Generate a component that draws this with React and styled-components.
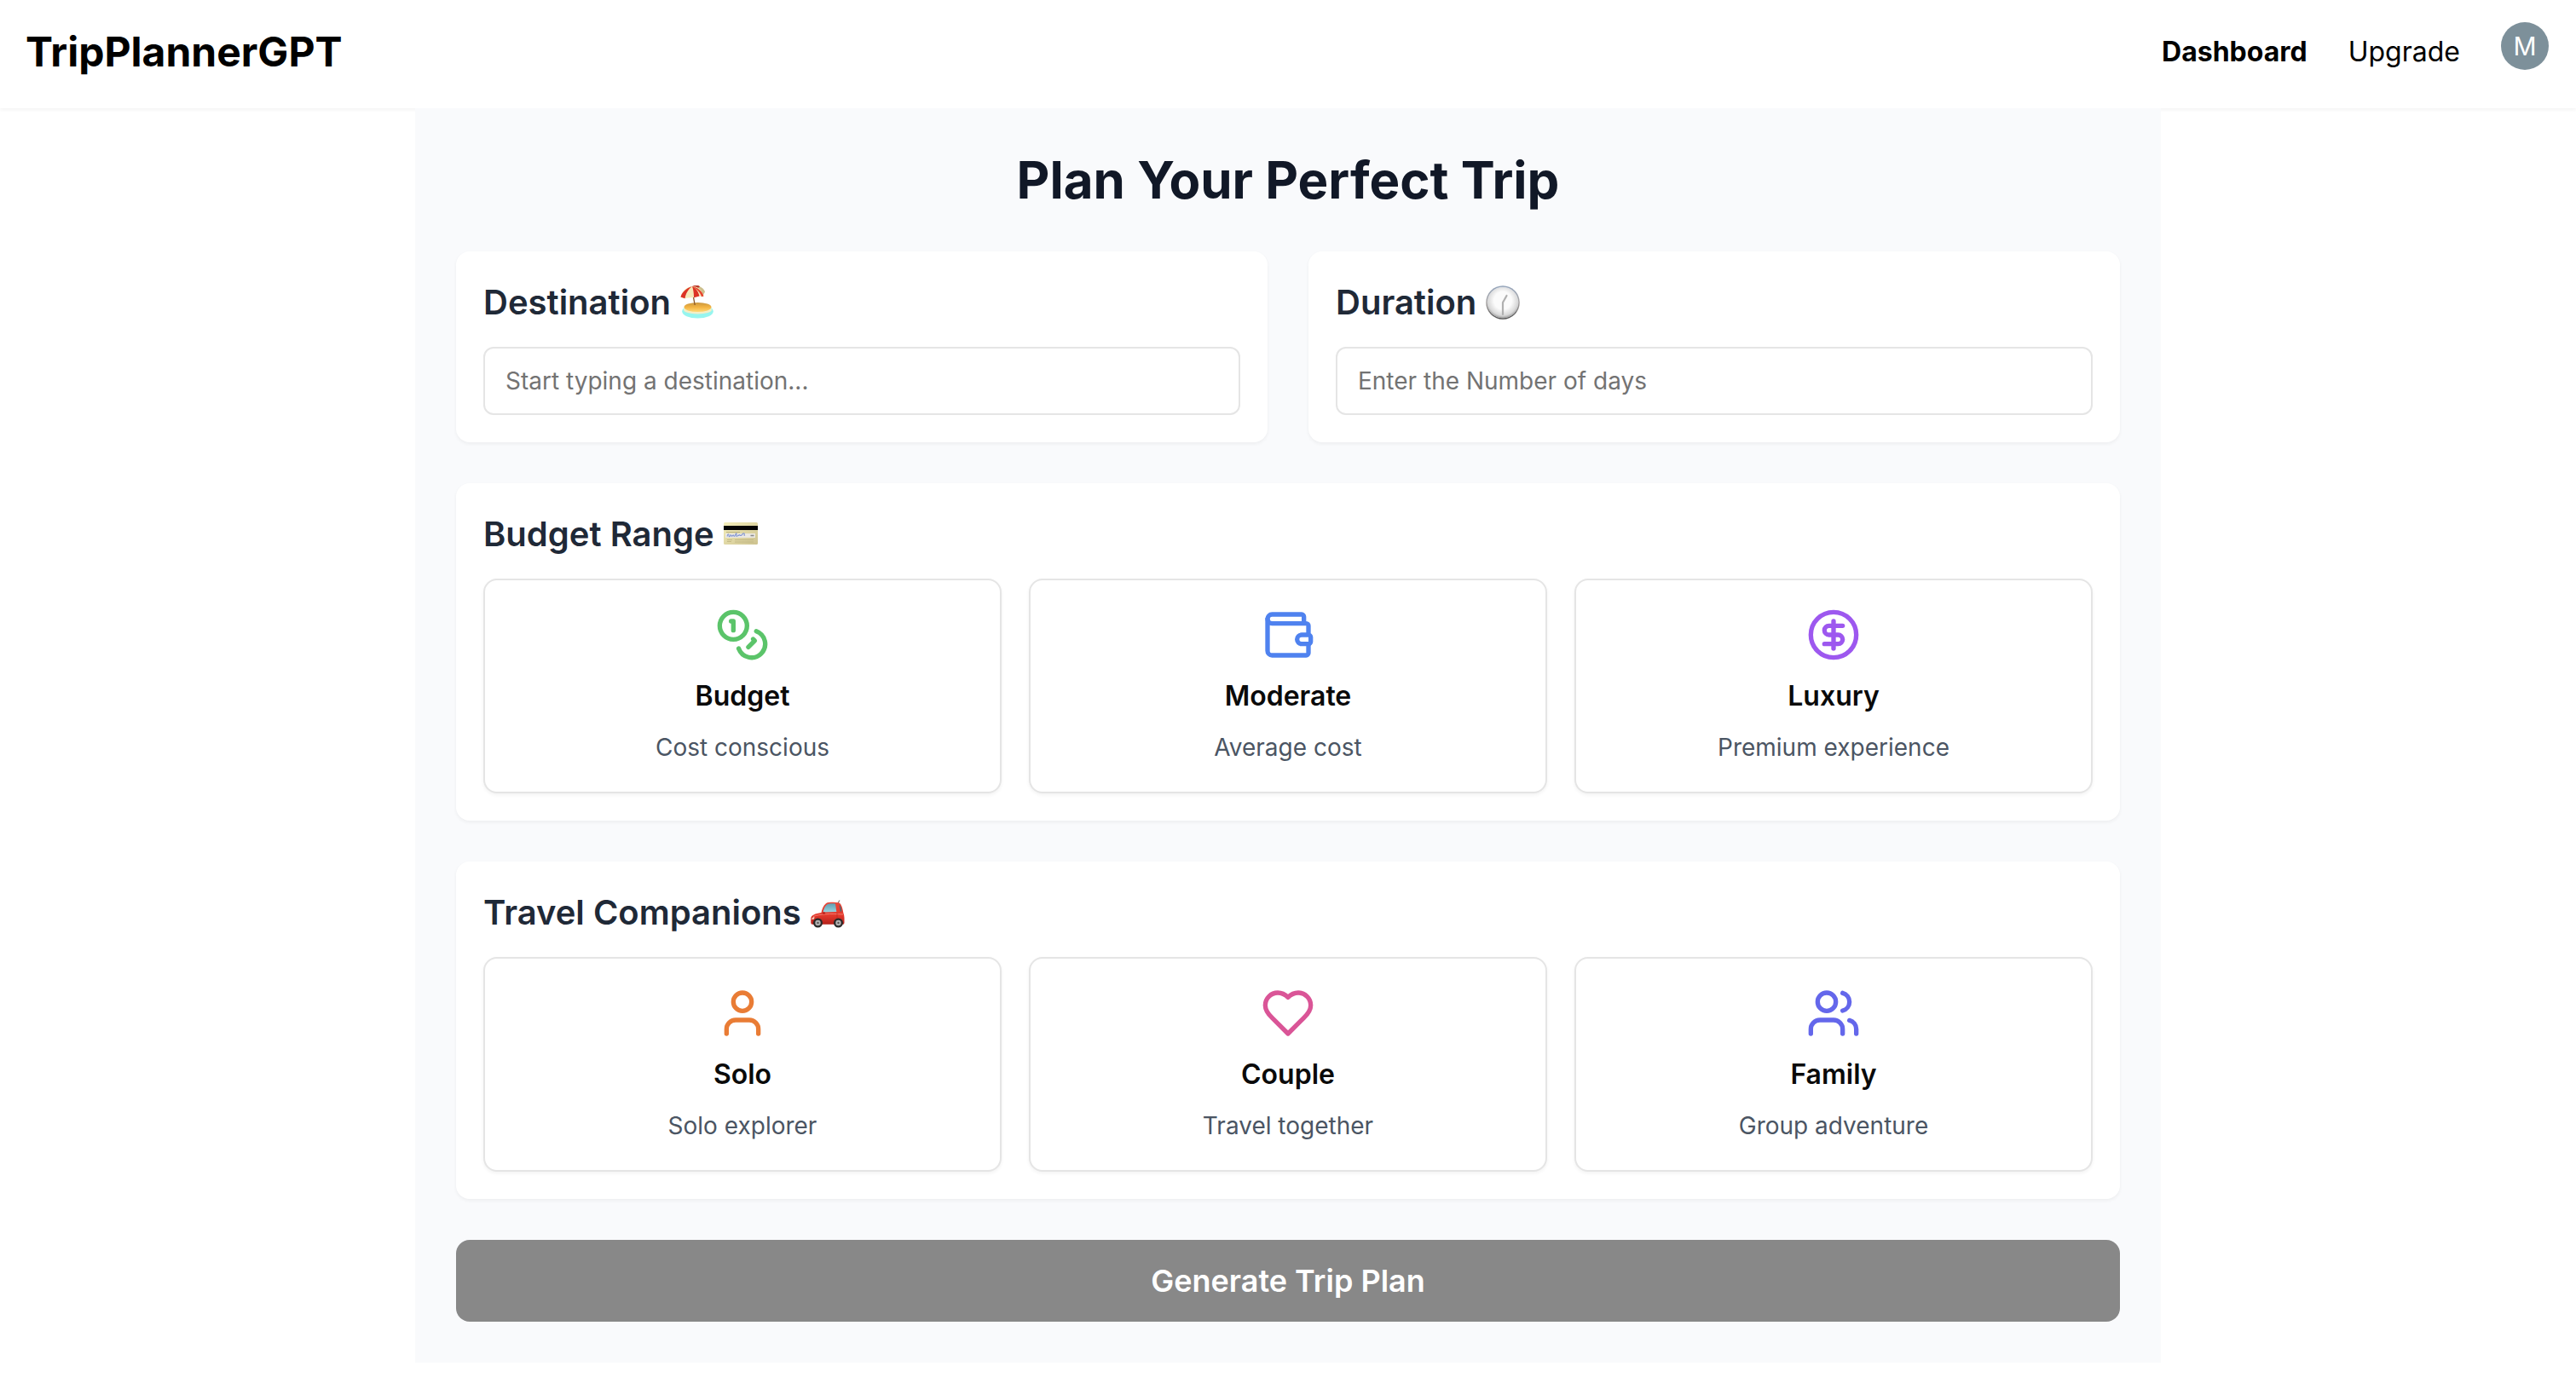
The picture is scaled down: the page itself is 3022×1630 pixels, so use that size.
import React, { useState } from "react";
import styled, { createGlobalStyle } from "styled-components";
import { Coins, Wallet, CircleDollarSign, User, Users } from "lucide-react";

const GlobalStyle = createGlobalStyle`
  *, *::before, *::after { box-sizing: border-box; }
  body {
    margin: 0;
    background: #ffffff;
    color: #0a0a0a;
    font-family: Inter, "Liberation Sans", sans-serif;
    -webkit-font-smoothing: antialiased;
  }
  h1, h2, h3, p { margin: 0; }
`;

const Header = styled.header`
  display: flex;
  justify-content: space-between;
  align-items: flex-start;
  padding: 26px 32px 31px 30px;
  background: #ffffff;
  box-shadow: 0 2px 4px rgba(0, 0, 0, 0.05);
`;

const Logo = styled.a`
  font-size: 48px;
  font-weight: 700;
  line-height: 70px;
  color: #000000;
  text-decoration: none;
`;

const Nav = styled.nav`
  display: flex;
  align-items: flex-start;
  gap: 48px;
`;

const NavLink = styled.a`
  font-size: 32px;
  font-weight: ${(p) => (p.$active ? 700 : 400)};
  line-height: 70px;
  color: #000000;
  text-decoration: none;
`;

const Avatar = styled.button`
  display: grid;
  place-items: center;
  width: 56px;
  height: 56px;
  padding: 0;
  border: 0;
  border-radius: 50%;
  background: #7d909a;
  color: #ffffff;
  font-family: inherit;
  font-size: 30px;
  line-height: 56px;
`;

const Planner = styled.main`
  position: relative;
  display: flex;
  flex-direction: column;
  gap: 48px;
  max-width: 2048px;
  margin: 0 auto;
  padding: 48px;
  background: #f9fafc;
`;

const Title = styled.h1`
  font-size: 60px;
  font-weight: 700;
  line-height: 72px;
  text-align: center;
  color: #111827;
`;

const Columns = styled.div`
  display: grid;
  grid-template-columns: repeat(${(p) => p.$count}, minmax(0, 1fr));
  gap: ${(p) => p.$gap}px;
`;

const Card = styled.section`
  display: flex;
  flex-direction: column;
  gap: 24px;
  padding: 32px;
  border-radius: 16px;
  background: #ffffff;
  box-shadow: 0 2px 4px rgba(0, 0, 0, 0.05);
`;

const CardHeading = styled.h2`
  display: flex;
  align-items: center;
  gap: 11px;
  font-size: 40px;
  font-weight: 600;
  line-height: 56px;
  color: #1f2937;

  svg { display: block; flex: none; }
`;

const Field = styled.input`
  width: 100%;
  height: 80px;
  padding: 0 24px;
  border: 2px solid #e5e5e5;
  border-radius: 12px;
  background: #ffffff;
  color: #0a0a0a;
  font-family: inherit;
  font-size: 28px;

  &::placeholder { color: #737373; opacity: 1; }
`;

const Option = styled.button`
  display: flex;
  flex-direction: column;
  align-items: center;
  gap: 16px;
  padding: 32px;
  border: 2px solid #e5e5e5;
  border-radius: 16px;
  background: #ffffff;
  box-shadow: 0 2px 4px rgba(0, 0, 0, 0.05);
  color: #0a0a0a;
  font-family: inherit;

  svg { display: block; color: ${(p) => p.$tint}; }
`;

const OptionName = styled.span`
  font-size: 32px;
  font-weight: 600;
  line-height: 48px;
`;

const OptionNote = styled.span`
  font-size: 28px;
  line-height: 40px;
  color: #4b5563;
`;

const Submit = styled.button`
  padding: 20px 32px;
  border: 0;
  border-radius: 16px;
  background: #888888;
  color: #ffffff;
  font-family: inherit;
  font-size: 36px;
  font-weight: 600;
  line-height: 56px;
`;

const HeartIcon = ({ size }) => (
  <svg
    width={size}
    height={size}
    viewBox="0 0 24 24"
    fill="none"
    stroke="currentColor"
    strokeWidth="2"
    strokeLinecap="round"
    strokeLinejoin="round"
    aria-hidden="true"
  >
    <path d="M19 14c1.49-1.46 3-3.21 3-5.5A5.5 5.5 0 0 0 16.5 3c-1.76 0-3 .5-4.5 2-1.5-1.5-2.74-2-4.5-2A5.5 5.5 0 0 0 2 8.5c0 2.3 1.5 4.05 3 5.5l7 7Z" />
  </svg>
);

const BeachIcon = () => (
  <svg width="40" height="40" viewBox="0 0 40 40" aria-hidden="true">
    <defs>
      <linearGradient id="sand" x1="0" y1="0" x2="0" y2="1">
        <stop offset="0" stopColor="#c9963f" />
        <stop offset="0.5" stopColor="#f3b443" />
        <stop offset="1" stopColor="#ffd978" />
      </linearGradient>
    </defs>
    <ellipse cx="20.5" cy="30.5" rx="18.3" ry="8" fill="#97f5ef" />
    <ellipse cx="20.5" cy="28.5" rx="16.5" ry="5" fill="#f3efc8" />
    <ellipse cx="20.5" cy="25.5" rx="16" ry="5.5" fill="url(#sand)" />
    <path d="M15 11l2.2 12" stroke="#8a5527" strokeWidth="1.3" />
    <path d="M14 1C22-1 28 3 29 7.5L26 13z" fill="#cdbf8d" />
    <path d="M14 1C18-1 22-.5 23 1.500l-3 2z" fill="#b93a2b" />
    <path d="M.5 14C1 8 7 1.500 14 1S26 6 27.500 13l-5-.5-6.500 1.500-7 .5-3.500.8z" fill="#f5e9b9" />
    <path d="M.5 13.500C2 8 7 3 14 1 9 5 6.500 9.500 5.500 15.300z" fill="#dc3325" />
    <path d="M14 1C19 3.500 21.500 8 22.500 12.500L16 14.200C16 9 15.500 5 14 1z" fill="#dc3325" />
    <path d="M14 1C20 2 26 6.500 27.500 12.500l-2.500.8C23.500 8 19 4 14 1z" fill="#e5462f" />
  </svg>
);

const ClockIcon = () => (
  <svg width="40" height="40" viewBox="0 0 40 40" aria-hidden="true">
    <defs>
      <linearGradient id="rim" x1="0" y1="0" x2="0" y2="1">
        <stop offset="0" stopColor="#93a4bb" />
        <stop offset="0.5" stopColor="#a9a5a4" />
        <stop offset="1" stopColor="#505050" />
      </linearGradient>
      <radialGradient id="dial" cx="0.5" cy="0.42" r="0.58">
        <stop offset="0.5" stopColor="#fbfbfb" />
        <stop offset="0.85" stopColor="#d8d8d8" />
        <stop offset="1" stopColor="#9c9c9c" />
      </radialGradient>
    </defs>
    <circle cx="20" cy="20" r="19.8" fill="url(#rim)" />
    <circle cx="20" cy="20" r="18.3" fill="#dfe1e5" />
    <circle cx="20" cy="20.5" r="17.8" fill="url(#dial)" />
    <path d="M24.5 12l-4.500 8v14" fill="none" stroke="#b0b0b0" strokeWidth="2.2" strokeLinecap="round" strokeLinejoin="round" />
  </svg>
);

const CreditCardIcon = () => (
  <svg width="40" height="40" viewBox="0 0 40 40" aria-hidden="true">
    <defs>
      <linearGradient id="plastic" x1="0" y1="0" x2="1" y2="1">
        <stop offset="0" stopColor="#f4eebb" />
        <stop offset="1" stopColor="#cdc28f" />
      </linearGradient>
    </defs>
    <rect x="0" y="6" width="40" height="26" rx="1.500" fill="url(#plastic)" />
    <rect x="0" y="10" width="40" height="5" fill="#050505" />
    <path d="M3 17.500h16" stroke="#b1a878" strokeWidth="0.8" />
    <rect x="2" y="19" width="35" height="5" fill="#ece9e2" />
    <path d="M4 22.500c1-4 2-3 2-1s2 1 2-.5 1 2 2 1 1-2 2 0 2-4 3-3-2 4 1 3 2-2 3-1 1 1 2 0 2-3 3-2-1 3 1 2" fill="none" stroke="#8397d2" strokeWidth="1.1" />
    <path d="M31.500 21.500h4" stroke="#8a8a8a" strokeWidth="1.6" />
    <path d="M4 26.500h6M4 28.500h5M13 26.500h22M13 29h22" stroke="#bdb27f" strokeWidth="0.8" />
  </svg>
);

const CarIcon = () => (
  <svg width="40" height="40" viewBox="0 0 40 40" aria-hidden="true">
    <defs>
      <linearGradient id="paint" x1="0" y1="0" x2="0" y2="1">
        <stop offset="0" stopColor="#e8483a" />
        <stop offset="0.6" stopColor="#e2382c" />
        <stop offset="1" stopColor="#b3201a" />
      </linearGradient>
      <linearGradient id="glass" x1="0" y1="0" x2="0" y2="1">
        <stop offset="0" stopColor="#5f9fb2" />
        <stop offset="1" stopColor="#9bd3de" />
      </linearGradient>
    </defs>
    <path d="M32 9l1.800-3.500" stroke="#444444" strokeWidth="0.9" />
    <path d="M12.500 20C14 13 17 8.500 21 8c4-.5 8-.5 12 .2 2.500.8 4.300 5 5.300 11.800.7 2 1.200 4 1.200 6v5.500c0 1.500-.8 2.300-2 2.300H3C1 33.800.3 33 .3 31.500V27c0-4 5-6 12.200-7z" fill="url(#paint)" />
    <path d="M14.500 19.500C16 13 18.500 9.800 22 9.500c2.500-.2 5-.2 7 0l1.300 9.500z" fill="url(#glass)" />
    <path d="M33.500 10.500c1.600 1.500 2.500 4.500 2.800 8l-1.300.3z" fill="#3c6b79" />
    <path d="M3 24.500c8-3 20-3.500 35-2.500" fill="none" stroke="#f37a6c" strokeWidth="1" />
    <path d="M31 20v11" stroke="#b5251c" strokeWidth="0.6" />
    <path d="M1 28c.5-2 2-3 3.500-3L4 27.500z" fill="#f6d9c8" />
    <ellipse cx="15.500" cy="20.500" rx="1.600" ry="1.200" fill="#b71d18" />
    <circle cx="8.500" cy="32" r="5.500" fill="#2a2a2a" />
    <circle cx="8.500" cy="32" r="3.200" fill="#b3b3b3" />
    <circle cx="8.500" cy="32" r="1.200" fill="#555555" />
    <circle cx="32.500" cy="32" r="5.500" fill="#2a2a2a" />
    <circle cx="32.500" cy="32" r="3.200" fill="#b3b3b3" />
    <circle cx="32.500" cy="32" r="1.200" fill="#555555" />
  </svg>
);

const budgets = [
  { name: "Budget", note: "Cost conscious", icon: Coins, tint: "#5bc46a" },
  { name: "Moderate", note: "Average cost", icon: Wallet, tint: "#4f82ef" },
  { name: "Luxury", note: "Premium experience", icon: CircleDollarSign, tint: "#9d58ef" },
];

const companions = [
  { name: "Solo", note: "Solo explorer", icon: User, tint: "#e97c35" },
  { name: "Couple", note: "Travel together", icon: HeartIcon, tint: "#da5597" },
  { name: "Family", note: "Group adventure", icon: Users, tint: "#6467eb" },
];

function OptionGroup({ title, emoji, options }) {
  const [selected, setSelected] = useState(null);
  return (
    <Card>
      <CardHeading>{title}{emoji}</CardHeading>
      <Columns $count={3} $gap={32}>
        {options.map(({ name, note, icon: Icon, tint }) => (
          <Option
            key={name}
            type="button"
            $tint={tint}
            aria-pressed={selected === name}
            onClick={() => setSelected(name)}
          >
            <Icon size={64} />
            <OptionName>{name}</OptionName>
            <OptionNote>{note}</OptionNote>
          </Option>
        ))}
      </Columns>
    </Card>
  );
}

export default function App() {
  return (
    <>
      <GlobalStyle />
      <Header>
        <Logo href="#">TripPlannerGPT</Logo>
        <Nav>
          <NavLink href="#dashboard" $active>Dashboard</NavLink>
          <NavLink href="#upgrade">Upgrade</NavLink>
          <Avatar type="button">M</Avatar>
        </Nav>
      </Header>
      <Planner>
        <Title>Plan Your Perfect Trip</Title>
        <Columns $count={2} $gap={48}>
          <Card>
            <CardHeading as="label" htmlFor="destination">Destination<BeachIcon /></CardHeading>
            <Field id="destination" type="text" placeholder="Start typing a destination..." />
          </Card>
          <Card>
            <CardHeading as="label" htmlFor="duration">Duration<ClockIcon /></CardHeading>
            <Field id="duration" type="text" inputMode="numeric" placeholder="Enter the Number of days" />
          </Card>
        </Columns>
        <OptionGroup title="Budget Range" emoji={<CreditCardIcon />} options={budgets} />
        <OptionGroup title="Travel Companions" emoji={<CarIcon />} options={companions} />
        <Submit type="submit">Generate Trip Plan</Submit>
      </Planner>
    </>
  );
}
